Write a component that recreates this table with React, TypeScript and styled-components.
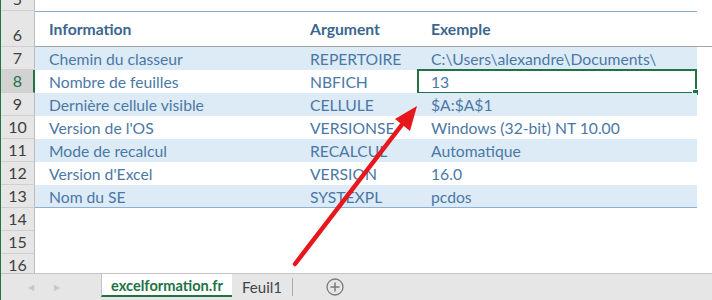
import React from 'react';
import styled, { createGlobalStyle } from 'styled-components';

const Global = createGlobalStyle`
  html, body { margin: 0; padding: 0; background: #fff; }
  body { width: 712px; height: 300px; overflow: hidden; font-family: Lato, "Open Sans", sans-serif; }
`;

const Frame = styled.div`
  position: relative;
  width: 712px;
  height: 300px;
  box-sizing: border-box;
  border-left: 1px solid #217346;
  display: flex;
  flex-direction: column;
  overflow: hidden;
`;

const Sheet = styled.div`
  height: 273px;
  overflow: hidden;
`;

const Scrolled = styled.div`
  margin-top: -12px;
`;

const Row = styled.div<{ $h: number }>`
  display: grid;
  grid-template-columns: 34px 261px 121px 280px 1fr;
  height: ${p => p.$h}px;
`;

const RowHead = styled.div<{ $sel?: boolean }>`
  box-sizing: border-box;
  background: ${p => (p.$sel ? '#d2d2d2' : '#e6e6e6')};
  color: ${p => (p.$sel ? '#217346' : '#3f3f3f')};
  border-right: ${p => (p.$sel ? '2px solid #217346' : '1px solid #bdbdbd')};
  border-bottom: 1px solid #cfcfcf;
  display: flex;
  align-items: flex-end;
  justify-content: center;
  padding-bottom: 1px;
  padding-left: ${p => (p.$sel ? '1px' : '0')};
  font-size: 16px;
  line-height: 20px;
`;

type CellKind = 'plain' | 'band';

const Cell = styled.div<{ $kind?: CellKind; $head?: boolean; $top?: boolean; $bottom?: boolean; $headLine?: boolean }>`
  position: relative;
  box-sizing: border-box;
  background: ${p => (p.$kind === 'band' ? '#ddebf7' : 'transparent')};
  color: ${p => (p.$head ? '#3b6690' : '#4a78a6')};
  font-weight: ${p => (p.$head ? 700 : 400)};
  font-size: 15.7px;
  padding-left: 14px;
  display: flex;
  align-items: center;
  padding-top: ${p => (p.$head ? '0' : '1px')};
  white-space: nowrap;
  border-top: ${p => (p.$top ? '1px solid #8eaac6' : 'none')};
  border-bottom: ${p => (p.$bottom ? '1px solid #8db0d6' : p.$headLine ? '1px solid #a3a3a3' : 'none')};
`;

const Selection = styled.div`
  position: absolute;
  left: 0;
  top: -1px;
  right: 0;
  bottom: -1px;
  border: 2px solid #217346;
  pointer-events: none;
`;

const Handle = styled.div`
  position: absolute;
  right: -4px;
  bottom: -4px;
  width: 5px;
  height: 5px;
  background: #217346;
  border: 1px solid #fff;
`;

const TabBar = styled.div`
  height: 27px;
  box-sizing: border-box;
  border-top: 1px solid #c4c4c4;
  background: #e6e6e6;
  display: flex;
  align-items: stretch;
`;

const Nav = styled.div`
  width: 100px;
  display: flex;
  align-items: center;
  gap: 20px;
  padding-left: 27px;
  box-sizing: border-box;
  color: #c6c6c6;
  font-size: 8px;
`;

const Tab = styled.div<{ $active?: boolean }>`
  box-sizing: border-box;
  width: ${p => (p.$active ? '131px' : '60px')};
  display: flex;
  align-items: center;
  justify-content: center;
  font-family: Lato, "Open Sans", sans-serif;
  font-size: ${p => (p.$active ? '14.6px' : '15px')};
  font-weight: ${p => (p.$active ? 700 : 400)};
  color: ${p => (p.$active ? '#217346' : '#444')};
  background: ${p => (p.$active ? '#fff' : 'transparent')};
  border-left: ${p => (p.$active ? '1px solid #c4c4c4' : 'none')};
  border-bottom: ${p => (p.$active ? '2px solid #217346' : 'none')};
  margin-bottom: ${p => (p.$active ? '3px' : '0')};
  padding-top: ${p => (p.$active ? '1px' : '0')};
`;

const Sep = styled.div`
  width: 1px;
  background: #a8a8a8;
  margin: 4px 0 4px 0;
`;

const AddButton = styled.div`
  width: 84px;
  display: flex;
  align-items: center;
  justify-content: center;
`;

const ArrowLayer = styled.svg`
  position: absolute;
  left: -1px;
  top: 0;
  pointer-events: none;
`;

const rows = [
  ['Chemin du classeur', 'REPERTOIRE', 'C:\\Users\\alexandre\\Documents\\'],
  ['Nombre de feuilles', 'NBFICH', '13'],
  ['Dernière cellule visible', 'CELLULE', '$A:$A$1'],
  ["Version de l'OS", 'VERSIONSE', 'Windows (32-bit) NT 10.00'],
  ['Mode de recalcul', 'RECALCUL', 'Automatique'],
  ["Version d'Excel", 'VERSION', '16.0'],
  ['Nom du SE', 'SYSTEXPL', 'pcdos'],
];

export default function App() {
  return (
    <>
      <Global />
      <Frame>
        <Sheet>
          <Scrolled>
            <Row $h={23}>
              <RowHead>5</RowHead>
              <Cell />
              <Cell />
              <Cell />
              <Cell />
            </Row>
            <Row $h={36}>
              <RowHead>6</RowHead>
              <Cell $head $top $headLine>Information</Cell>
              <Cell $head $top $headLine>Argument</Cell>
              <Cell $head $top $headLine>Exemple</Cell>
              <Cell $headLine />
            </Row>
            {rows.map((r, i) => {
              const n = 7 + i;
              const kind: CellKind = i % 2 === 0 ? 'band' : 'plain';
              const last = i === rows.length - 1;
              const sel = n === 8;
              return (
                <Row $h={23} key={n}>
                  <RowHead $sel={sel}>{n}</RowHead>
                  <Cell $kind={kind} $bottom={last}>{r[0]}</Cell>
                  <Cell $kind={kind} $bottom={last}>{r[1]}</Cell>
                  <Cell $kind={kind} $bottom={last}>
                    {r[2]}
                    {sel && (
                      <Selection>
                        <Handle />
                      </Selection>
                    )}
                  </Cell>
                  <Cell />
                </Row>
              );
            })}
            {[14, 15, 16].map(n => (
              <Row $h={23} key={n}>
                <RowHead>{n}</RowHead>
                <Cell />
                <Cell />
                <Cell />
                <Cell />
              </Row>
            ))}
          </Scrolled>
        </Sheet>
        <TabBar>
          <Nav>
            <span>◀</span>
            <span>▶</span>
          </Nav>
          <Tab $active>excelformation.fr</Tab>
          <Tab>Feuil1</Tab>
          <Sep />
          <AddButton>
            <svg width="18" height="18" viewBox="0 0 18 18">
              <circle cx="9" cy="9" r="8" fill="none" stroke="#7a7a7a" strokeWidth="1.3" />
              <path d="M9 4.5v9M4.5 9h9" stroke="#7a7a7a" strokeWidth="1.5" />
            </svg>
          </AddButton>
        </TabBar>
        <ArrowLayer width="712" height="300" viewBox="0 0 712 300">
          <line x1="295" y1="264" x2="404" y2="122" stroke="#e8171c" strokeWidth="4.5" strokeLinecap="round" />
          <polygon points="417,106 410,131 395,119" fill="#e8171c" />
        </ArrowLayer>
      </Frame>
    </>
  );
}
